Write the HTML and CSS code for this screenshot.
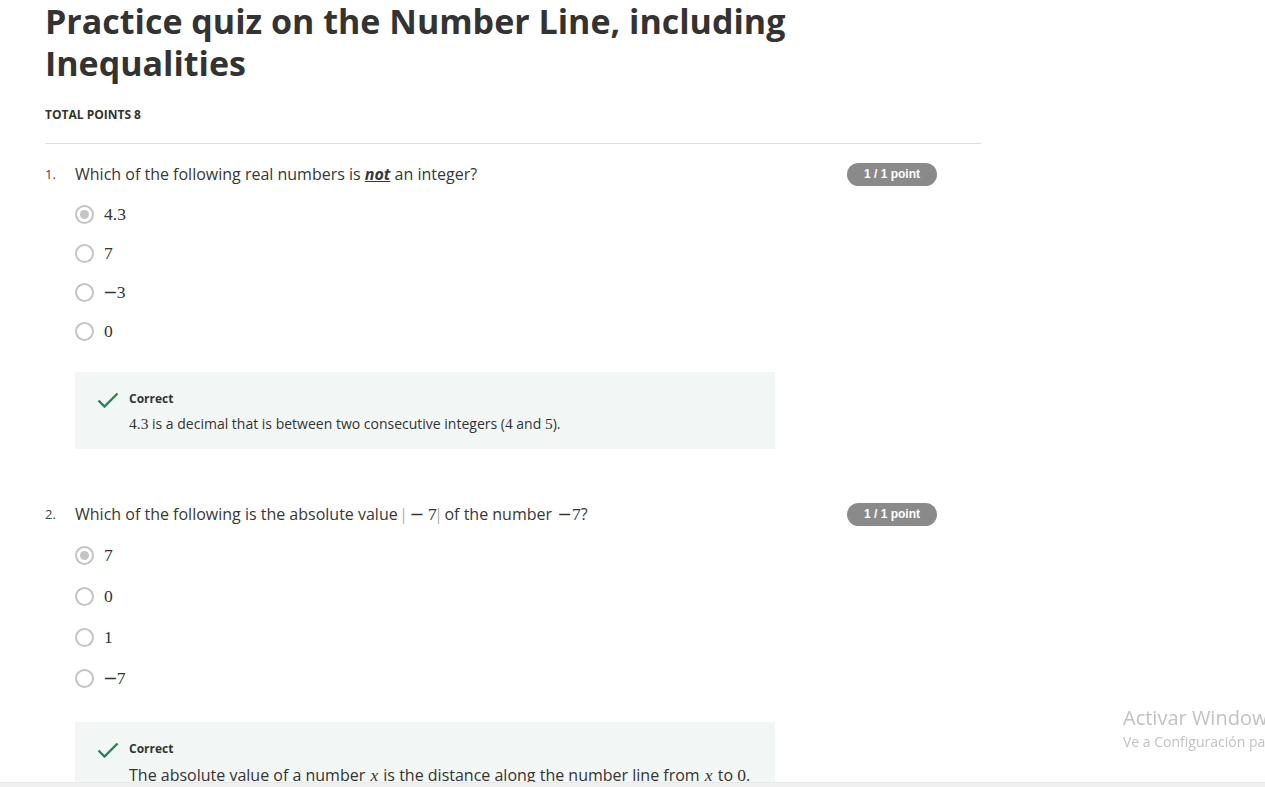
FILE: index.html
```html
<!DOCTYPE html>
<html lang="en">
<head>
<meta charset="utf-8">
<title>Practice quiz on the Number Line, including Inequalities</title>
<link rel="stylesheet" href="styles.css">
</head>
<body>
<main class="page">
  <h1 class="title">Practice quiz on the Number Line, including Inequalities</h1>
  <div class="total">TOTAL POINTS 8</div>
  <hr class="divider">

  <section class="question">
    <div class="q-head">
      <span class="q-num">1.</span>
      <div class="q-text">Which of the following real numbers is <em class="not">not</em> an integer?</div>
      <span class="badge">1 / 1 point</span>
    </div>
    <ul class="options">
      <li class="option"><span class="radio checked"></span><span class="math">4.3</span></li>
      <li class="option"><span class="radio"></span><span class="math">7</span></li>
      <li class="option"><span class="radio"></span><span class="math"><span class="minus">−</span>3</span></li>
      <li class="option"><span class="radio"></span><span class="math">0</span></li>
    </ul>
    <div class="feedback">
      <svg class="check" viewBox="0 0 22 16" width="22" height="16"><path d="M1.5 8.5 L7.5 14.5 L20.5 1.5" fill="none" stroke="#25844f" stroke-width="2.4"/></svg>
      <div class="fb-body">
        <div class="fb-title">Correct</div>
        <div class="fb-text"><span class="math">4.3</span> is a decimal that is between two consecutive integers (<span class="math">4</span> and <span class="math">5</span>).</div>
      </div>
    </div>
  </section>

  <section class="question q-second">
    <div class="q-head">
      <span class="q-num">2.</span>
      <div class="q-text">Which of the following is the absolute value <span class="math"><span class="bar">|</span><span class="minus bin">−</span>7<span class="bar">|</span></span> of the number <span class="math"><span class="minus bin-left">−</span>7</span>?</div>
      <span class="badge">1 / 1 point</span>
    </div>
    <ul class="options options-loose">
      <li class="option"><span class="radio checked"></span><span class="math">7</span></li>
      <li class="option"><span class="radio"></span><span class="math">0</span></li>
      <li class="option"><span class="radio"></span><span class="math">1</span></li>
      <li class="option"><span class="radio"></span><span class="math"><span class="minus">−</span>7</span></li>
    </ul>
    <div class="feedback feedback-loose">
      <svg class="check" viewBox="0 0 22 16" width="22" height="16"><path d="M1.5 8.5 L7.5 14.5 L20.5 1.5" fill="none" stroke="#25844f" stroke-width="2.4"/></svg>
      <div class="fb-body">
        <div class="fb-title">Correct</div>
        <div class="fb-text fb-text-lg">The absolute value of a number <span class="math var">x</span> is the distance along the number line from <span class="math var">x</span> to <span class="math">0</span>.</div>
        <div class="fb-text fb-text-lg">The distance from <span class="math"><span class="minus">−</span>7</span> to <span class="math">0</span> is <span class="math">7</span>.</div>
      </div>
    </div>
  </section>
</main>

<div class="watermark">
  <div class="wm-title">Activar Windows</div>
  <div class="wm-sub">Ve a Configuración para activar Windows.</div>
</div>
<div class="bottom-bar"></div>
</body>
</html>
```

FILE: styles.css
```css
html {
  overflow: hidden;
}

body {
  margin: 0;
  background: #ffffff;
  font-family: "Open Sans", "Noto Sans", sans-serif;
  color: #333333;
}

.page {
  width: 936px;
  padding-left: 45px;
}

.title {
  margin: 0;
  max-width: 820px;
  font-size: 34px;
  line-height: 42px;
  font-weight: 700;
  color: #333333;
}

.total {
  margin-top: 23px;
  font-size: 12px;
  line-height: 16px;
  font-weight: 700;
  color: #333333;
}

.divider {
  margin: 20px 0 0 0;
  border: 0;
  border-top: 1px solid #dddddd;
  height: 0;
}

.question {
  margin-top: 18px;
}

.q-second {
  margin-top: 53px;
}

.q-head {
  display: grid;
  grid-template-columns: 30px 1fr auto;
  align-items: center;
  padding-right: 44px;
  height: 24px;
}

.q-num {
  font-size: 13px;
  color: #444444;
}

.q-text {
  font-size: 16px;
  line-height: 24px;
  color: #373737;
}

.not {
  font-weight: 700;
  font-style: italic;
  text-decoration: underline;
}

.badge {
  display: inline-block;
  height: 23px;
  line-height: 23px;
  padding: 0 17px;
  border-radius: 12px;
  background: #8a8a8a;
  color: #ffffff;
  font-family: "Liberation Sans", Arial, sans-serif;
  font-size: 12px;
  font-weight: 700;
}

.options {
  list-style: none;
  margin: 9px 0 0 0;
  padding: 0 0 0 30px;
}

.option {
  display: flex;
  align-items: center;
  height: 39px;
}

.options-loose .option {
  height: 41px;
}

.radio {
  box-sizing: border-box;
  width: 19px;
  height: 19px;
  border: 2px solid #c4c4c4;
  border-radius: 50%;
  margin-right: 10px;
  flex: none;
  position: relative;
}

.radio.checked::after {
  content: "";
  position: absolute;
  left: 3px;
  top: 3px;
  width: 9px;
  height: 9px;
  border-radius: 50%;
  background: #c4c4c4;
}

.math {
  font-family: "Liberation Serif", "Times New Roman", serif;
  font-size: 17.5px;
  color: #333333;
}

.minus {
  font-family: "DejaVu Serif", "Liberation Serif", serif;
  font-weight: 300;
  margin-left: -1px;
  margin-right: -1px;
}

.bin {
  margin: 0 4px 0 4px;
}

.bin-left {
  margin-left: 1px;
  margin-right: 0;
}

.var {
  font-style: italic;
}

.bar {
  color: #9a9a9a;
  font-weight: 300;
}

.feedback {
  margin: 21px 0 0 30px;
  width: 700px;
  box-sizing: border-box;
  background: #f2f7f5;
  padding: 19px 14px 14px 22px;
  display: flex;
  gap: 10px;
}

.feedback-loose {
  margin-top: 23px;
}

.check {
  flex: none;
  margin-top: 1px;
}

.fb-title {
  font-size: 12px;
  line-height: 16px;
  font-weight: 700;
  color: #333333;
}

.fb-text {
  margin-top: 6px;
  font-size: 14px;
  line-height: 22px;
  color: #333333;
}

.fb-text .math {
  font-size: 15.5px;
}

.fb-text-lg {
  font-size: 16px;
  line-height: 24px;
}

.fb-text-lg .math {
  font-size: 17.5px;
}

.fb-text-lg .var {
  margin: 0 1px;
}

.watermark {
  position: fixed;
  left: 1123px;
  top: 705px;
  width: 142px;
  overflow: hidden;
  white-space: nowrap;
  font-family: "Open Sans", "Noto Sans", sans-serif;
  color: #c2c2c2;
}

.wm-title {
  font-size: 20px;
  line-height: 26px;
}

.wm-sub {
  font-size: 14px;
  line-height: 22px;
}

.bottom-bar {
  position: fixed;
  left: 0;
  right: 0;
  bottom: 0;
  height: 4px;
  background: #f0f0f0;
  border-top: 1px solid #e8e8e8;
}
```
